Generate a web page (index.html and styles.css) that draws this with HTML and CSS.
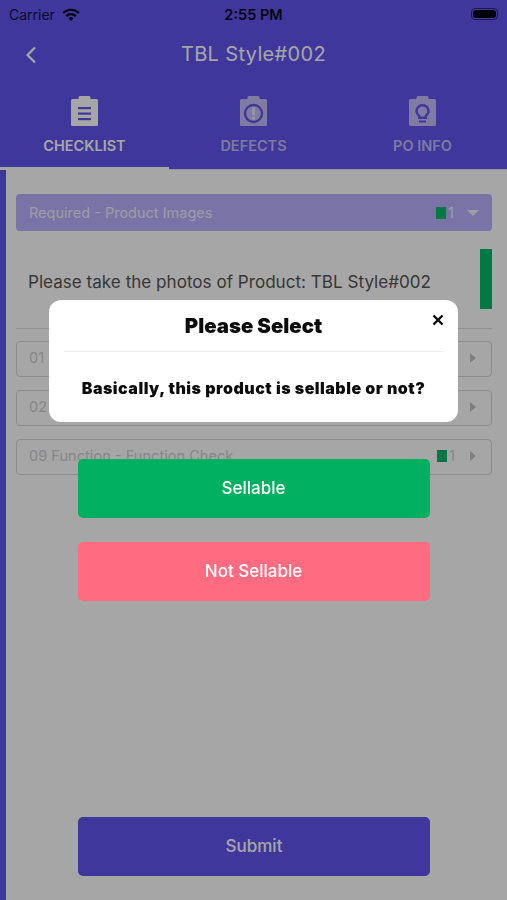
FILE: index.html
```html
<!DOCTYPE html>
<html lang="en">
<head>
    <meta charset="UTF-8">
    <meta name="viewport" content="width=device-width, initial-scale=1.0">
    <title>TBL Style#002</title>
    <link rel="stylesheet" href="styles.css">
</head>
<body>
    <div class="page">
        <header class="header">
            <div class="status-bar">
                <div class="status-left">
                    <span>Carrier</span>
                    <svg class="wifi" width="18" height="13" viewBox="0 0 18 13">
                        <path d="M0.4 4.2a12.2 12.2 0 0 1 17.2 0l-1.5 1.6a10 10 0 0 0-14.2 0z"/>
                        <path d="M3.4 7.3a8 8 0 0 1 11.2 0l-1.6 1.6a5.7 5.7 0 0 0-8 0z"/>
                        <path d="M6.4 10.3a3.7 3.7 0 0 1 5.2 0L9 13z"/>
                    </svg>
                </div>
                <span class="status-time">2:55 PM</span>
                <div class="battery"><span class="battery-fill"></span></div>
            </div>
            <div class="nav">
                <svg class="back" width="12" height="18" viewBox="0 0 12 18">
                    <path d="M10 1.5 2.5 9l7.5 7.5" fill="none" stroke="currentColor" stroke-width="2.2"/>
                </svg>
                <h1 class="nav-title">TBL Style#002</h1>
            </div>
            <div class="tabs">
                <div class="tab active">
                    <svg class="tab-icon" width="27" height="30" viewBox="0 0 27 30">
                        <path fill="currentColor" d="M9 0h9a1.500 1.500 0 0 1 1.500 1.500V3H25.500A1.500 1.500 0 0 1 27 4.500V28.500A1.500 1.500 0 0 1 25.500 30H1.500A1.500 1.500 0 0 1 0 28.500V4.500A1.500 1.500 0 0 1 1.500 3H7.500V1.500A1.500 1.500 0 0 1 9 0z"/>
                        <rect class="cut" x="7" y="11" width="13" height="2.200"/>
                        <rect class="cut" x="7" y="16.500" width="13" height="2.200"/>
                        <rect class="cut" x="7" y="22" width="13" height="2.200"/>
                    </svg>
                    <span class="tab-label">CHECKLIST</span>
                </div>
                <div class="tab">
                    <svg class="tab-icon" width="27" height="30" viewBox="0 0 27 30">
                        <path fill="currentColor" d="M9 0h9a1.500 1.500 0 0 1 1.500 1.500V3H25.500A1.500 1.500 0 0 1 27 4.500V28.500A1.500 1.500 0 0 1 25.500 30H1.500A1.500 1.500 0 0 1 0 28.500V4.500A1.500 1.500 0 0 1 1.500 3H7.500V1.500A1.500 1.500 0 0 1 9 0z"/>
                        <circle cx="13.500" cy="17.500" r="8.500" fill="none" stroke="#6155ef" stroke-width="2.400"/>
                        <rect fill="currentColor" x="12.100" y="11.500" width="2.800" height="8"/>
                        <circle fill="currentColor" cx="13.500" cy="22.300" r="1.600"/>
                    </svg>
                    <span class="tab-label">DEFECTS</span>
                </div>
                <div class="tab">
                    <svg class="tab-icon" width="27" height="30" viewBox="0 0 27 30">
                        <path fill="currentColor" d="M9 0h9a1.500 1.500 0 0 1 1.500 1.500V3H25.500A1.500 1.500 0 0 1 27 4.500V28.500A1.500 1.500 0 0 1 25.500 30H1.500A1.500 1.500 0 0 1 0 28.500V4.500A1.500 1.500 0 0 1 1.500 3H7.500V1.500A1.500 1.500 0 0 1 9 0z"/>
                        <path class="cut" d="M13.500 8a7 7 0 0 1 4.500 12.400V23h-9v-2.600A7 7 0 0 1 13.500 8zm0 2.400a4.600 4.600 0 0 0-2.800 8.300l.7.600v1.300h4.200v-1.300l.7-.6a4.600 4.600 0 0 0-2.800-8.300z"/>
                        <rect class="cut" x="10" y="24.500" width="7" height="2"/>
                    </svg>
                    <span class="tab-label">PO INFO</span>
                </div>
            </div>
        </header>

        <div class="body">
            <div class="side-strip"></div>
            <main class="content">
                <div class="section-head">
                    <span class="section-name">Required - Product Images</span>
                    <span class="count-box"></span>
                    <span class="count-num">1</span>
                    <span class="caret-down"></span>
                </div>

                <div class="question">
                    <p class="question-text">Please take the photos of Product: TBL Style#002</p>
                    <span class="question-bar"></span>
                </div>

                <div class="rows">
                    <div class="row">
                        <span class="row-name">01</span>
                        <span class="caret-right"></span>
                    </div>
                    <div class="row">
                        <span class="row-name">02</span>
                        <span class="caret-right"></span>
                    </div>
                    <div class="row">
                        <span class="row-name">09 Function - Function Check</span>
                        <span class="count-box"></span>
                        <span class="count-num">1</span>
                        <span class="caret-right"></span>
                    </div>
                </div>

                <button class="btn btn-submit">Submit</button>
            </main>
        </div>
    </div>

    <!-- Popup over the dimmed page -->
    <div class="overlay">
        <div class="modal">
            <svg class="modal-close" width="12" height="12" viewBox="0 0 12 12">
                <path d="M1.500 1.500l9 9M10.500 1.500l-9 9" fill="none" stroke="currentColor" stroke-width="2.400"/>
            </svg>
            <h2 class="modal-title">Please Select</h2>
            <p class="modal-text">Basically, this product is sellable or not?</p>
        </div>
        <button class="btn btn-sellable">Sellable</button>
        <button class="btn btn-not-sellable">Not Sellable</button>
    </div>
</body>
</html>
```

FILE: styles.css
```css
body {
    font-family: 'Inter', 'Liberation Sans', sans-serif;
    margin: 0;
    height: 100vh;
    overflow: hidden;
    background: #fff;
    color: #333;
}
.page {
    display: flex;
    flex-direction: column;
    height: 100%;
}

/* Header */
.header {
    background: #6155ef;
    color: #fff;
}
.status-bar {
    height: 28px;
    display: flex;
    align-items: center;
    justify-content: space-between;
    position: relative;
    padding: 0 9px;
    color: #12103a;
    font-size: 14px;
}
.status-left {
    display: flex;
    align-items: center;
    gap: 7px;
}
.wifi {
    fill: #0a0920;
}
.status-time {
    position: absolute;
    left: 0;
    right: 0;
    text-align: center;
    font-size: 14.5px;
    font-weight: 600;
    color: #0c0b20;
}
.battery {
    width: 27px;
    height: 12px;
    padding: 1px;
    border: 1px solid #2d2872;
    border-radius: 4px;
    box-sizing: border-box;
}
.battery-fill {
    display: block;
    height: 100%;
    background: #05040f;
    border-radius: 3px;
}
.nav {
    height: 52px;
    display: flex;
    align-items: center;
    justify-content: center;
    position: relative;
}
.back {
    position: absolute;
    left: 25px;
    top: 18px;
}
.nav-title {
    margin: 0;
    font-size: 20px;
    font-weight: 400;
    letter-spacing: 0.35px;
}
.tabs {
    display: flex;
    height: 90px;
}
.tab {
    flex: 1;
    display: flex;
    flex-direction: column;
    align-items: center;
    box-sizing: border-box;
    padding-top: 16px;
    border-bottom: 1px solid #e4e2fb;
    color: rgba(255, 255, 255, 0.62);
}
.tab.active {
    color: #fff;
    border-bottom: 3px solid #fff;
}
.tab-icon {
    display: block;
}
.cut {
    fill: #6155ef;
}
.tab-label {
    margin-top: 10px;
    font-size: 14.5px;
    font-weight: 600;
    line-height: 20px;
}

/* Checklist */
.body {
    flex: 1;
    display: flex;
    background: #fff;
}
.side-strip {
    width: 6px;
    background: #6155ef;
}
.content {
    flex: 1;
    display: flex;
    flex-direction: column;
    padding: 24px 15px 24px 10px;
}
.section-head {
    height: 37px;
    display: flex;
    align-items: center;
    padding: 0 13px;
    background: #bcb3ff;
    border-radius: 4px;
    color: #f0eeff;
    font-size: 14.5px;
}
.section-name,
.row-name {
    flex: 1;
}
.count-box {
    width: 10px;
    height: 12px;
    background: #00bc6a;
}
.count-num {
    width: 16px;
    padding-left: 2px;
    box-sizing: border-box;
}
.caret-down {
    margin-left: 5px;
    border-left: 6px solid transparent;
    border-right: 6px solid transparent;
    border-top: 6px solid #f0eeff;
}
.question {
    display: flex;
    justify-content: space-between;
    align-items: center;
    height: 60px;
    margin-top: 18px;
    padding: 0 0 19px 12px;
    border-bottom: 1px solid #ddd;
}
.question-text {
    margin: 4px 0 0;
    font-size: 17.1px;
    color: #555;
}
.question-bar {
    width: 12px;
    height: 60px;
    background: #00bc6a;
}
.rows {
    display: flex;
    flex-direction: column;
    gap: 13px;
    margin-top: 12px;
}
.row {
    height: 36px;
    display: flex;
    align-items: center;
    padding: 0 12px 2px 12px;
    border: 1.5px solid #d8d8d8;
    border-radius: 4px;
    box-sizing: border-box;
    color: #d0d0d0;
    font-size: 14.6px;
}
.caret-right {
    margin: 0 3px 0 7px;
    border-top: 5px solid transparent;
    border-bottom: 5px solid transparent;
    border-left: 6px solid #c4c4c4;
}
.btn {
    display: block;
    width: 352px;
    height: 59px;
    padding: 0 0 1px;
    border: none;
    border-radius: 5px;
    color: #fff;
    font-family: inherit;
    font-size: 17px;
    font-weight: 500;
}
.btn-submit {
    margin-top: auto;
    align-self: center;
    background: #6155ef;
}

/* Popup */
.overlay {
    position: fixed;
    top: 0;
    left: 0;
    width: 100%;
    height: 100%;
    display: flex;
    flex-direction: column;
    align-items: center;
    padding-top: 300px;
    box-sizing: border-box;
    background: rgba(0, 0, 0, 0.35);
}
.modal {
    position: relative;
    width: 409px;
    height: 122px;
    box-sizing: border-box;
    padding: 0 15px;
    background: #fff;
    border-radius: 12px;
    text-align: center;
    color: #0b0b0b;
}
.modal-close {
    position: absolute;
    right: 14px;
    top: 14px;
}
.modal-title {
    margin: 0;
    height: 52px;
    box-sizing: border-box;
    padding-top: 13px;
    border-bottom: 1px solid #eee;
    font-size: 20.4px;
    line-height: 26px;
    font-weight: 900;
}
.modal-text {
    margin: 25px 0 0;
    font-size: 16px;
    line-height: 22px;
    font-weight: 900;
    letter-spacing: 0.5px;
}
.btn-sellable {
    margin-top: 37px;
    background: #00b061;
}
.btn-not-sellable {
    margin-top: 24px;
    background: #ff6b81;
}
```
